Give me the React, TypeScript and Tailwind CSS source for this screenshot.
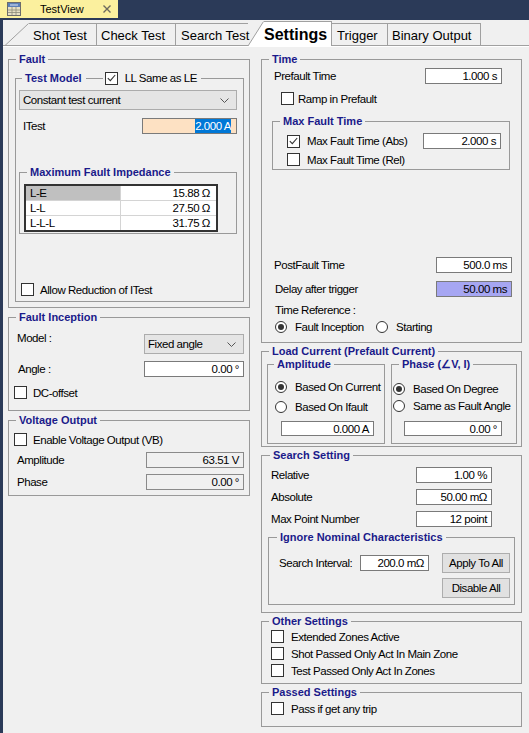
import React from "react";

const FONT = "font-['Liberation_Sans',Arial,sans-serif] text-[11.5px] tracking-[-0.45px]";
const TITLE = "font-['Liberation_Sans',Arial,sans-serif] text-[11px] leading-[14px] font-bold text-[#1a1a8a] tracking-normal";
const TAB = "font-['Liberation_Sans',Arial,sans-serif] text-[13px] tracking-normal";

function Group({
  title,
  className = "",
  legend = "ml-[7px]",
  children,
}: {
  title: React.ReactNode;
  className?: string;
  legend?: string;
  children?: React.ReactNode;
}) {
  return (
    <fieldset className={`border border-[#999] min-w-0 shrink-0 ${className}`}>
      <legend className={`px-[3px] ${legend} ${TITLE}`}>{title}</legend>
      <div className="flex flex-col">{children}</div>
    </fieldset>
  );
}

function Check({
  label,
  checked = false,
  className = "",
  gap = "ml-[7px]",
}: {
  label: string;
  checked?: boolean;
  className?: string;
  gap?: string;
}) {
  return (
    <div className={`flex items-center h-[13px] ${className}`}>
      <span className="w-[13px] h-[13px] shrink-0 border border-[#333] bg-white flex items-center justify-center">
        {checked && (
          <svg width="9" height="8" viewBox="0 0 9 8">
            <path d="M0.8 4.2 L3.3 6.6 L8.2 1" fill="none" stroke="#333" strokeWidth="1.1" />
          </svg>
        )}
      </span>
      <span className={`${gap} whitespace-nowrap leading-[14px]`}>{label}</span>
    </div>
  );
}

function Radio({ label, checked = false, className = "" }: { label: string; checked?: boolean; className?: string }) {
  return (
    <div className={`flex items-center h-[12px] ${className}`}>
      <span className="w-[12px] h-[12px] shrink-0 rounded-full border border-[#333] bg-white flex items-center justify-center">
        {checked && <span className="w-[6px] h-[6px] rounded-full bg-[#333]" />}
      </span>
      <span className="ml-[8px] whitespace-nowrap leading-[14px]">{label}</span>
    </div>
  );
}

function Field({
  children,
  className = "",
  tone = "bg-white",
}: {
  children: React.ReactNode;
  className?: string;
  tone?: string;
}) {
  return (
    <div
      className={`shrink-0 border border-[#7a7a7a] ${tone} flex items-center justify-end pr-[4px] whitespace-nowrap leading-[14px] ${className}`}
    >
      {children}
    </div>
  );
}

function Select({ children, className = "" }: { children: React.ReactNode; className?: string }) {
  return (
    <div className={`shrink-0 flex items-center border border-[#acacac] bg-[#e5e5e5] pl-[3px] pr-[7px] ${className}`}>
      <span className="whitespace-nowrap">{children}</span>
      <svg className="ml-auto" width="9" height="5" viewBox="0 0 9 5">
        <polyline points="0.5,0.5 4.5,4.5 8.5,0.5" fill="none" stroke="#555" />
      </svg>
    </div>
  );
}

function Button({ children }: { children: React.ReactNode }) {
  return (
    <div className="w-[68px] h-[20px] shrink-0 border border-[#adadad] bg-[#e1e1e1] flex items-center justify-center whitespace-nowrap">
      {children}
    </div>
  );
}

function Row({
  label,
  value,
  labelClass,
  fieldClass,
  className = "",
  tone,
}: {
  label: string;
  value: string;
  labelClass: string;
  fieldClass: string;
  className?: string;
  tone?: string;
}) {
  return (
    <div className={`flex items-center h-[16px] ${className}`}>
      <span className={`${labelClass} whitespace-nowrap leading-[14px]`}>{label}</span>
      <Field className={`ml-auto h-[16px] ${fieldClass}`} tone={tone}>
        {value}
      </Field>
    </div>
  );
}

const impedance = [
  ["L-E", "15.88 Ω"],
  ["L-L", "27.50 Ω"],
  ["L-L-L", "31.75 Ω"],
];

export default function App() {
  return (
    <div className={`w-[529px] h-[733px] overflow-hidden bg-[#f0f0f0] leading-[14px] text-black ${FONT}`}>
      {/* document tab bar */}
      <div className="h-[20px] bg-[#2b3a58] flex items-start">
        <div className="h-[18px] w-[118px] bg-[#fbf09e] flex items-center">
          <svg width="14" height="14" viewBox="0 0 14 14" className="ml-[7px] shrink-0">
            <rect x="0.5" y="0.5" width="13" height="13" fill="#e6dfc4" stroke="#6b6b6b" />
            <rect x="1" y="1" width="12" height="4" fill="#5b7fb8" />
            <line x1="3" y1="3" x2="11" y2="3" stroke="#dfe8f5" />
            <path d="M1 8H13M1 10.5H13M5 5V13M9 5V13" stroke="#8a8a7a" strokeWidth="0.8" />
          </svg>
          <span className="ml-[19px] text-[11px] tracking-normal">TestView</span>
          <svg className="ml-auto mr-[7px]" width="8" height="8" viewBox="0 0 8 8">
            <path d="M0.5 0.5 L7.5 7.5 M7.5 0.5 L0.5 7.5" stroke="#6d6a5e" strokeWidth="1.4" />
          </svg>
        </div>
      </div>

      <div className="flex h-[713px]">
        <div className="w-[3px] shrink-0 bg-[#2b3a58]" />
        <div className="flex-1 flex flex-col">
          {/* tabs */}
          <div className="h-[26px] flex items-end shrink-0">
            <div className="w-[2px] h-[23px] border-b border-[#a0a0a0] shrink-0" />
            <svg width="24" height="23" className="shrink-0 block">
              <path d="M0 22.5 L23.5 0.5" stroke="#a0a0a0" fill="none" />
              <line x1="0" y1="22.5" x2="24" y2="22.5" stroke="#a0a0a0" />
            </svg>
            <div className={`w-[68px] h-[23px] pl-[4px] pt-[2px] border-t border-r border-b border-[#a0a0a0] flex items-center whitespace-nowrap ${TAB}`}>
              Shot Test
            </div>
            <div className={`w-[79px] h-[23px] pl-[4px] pt-[2px] border-t border-r border-b border-[#a0a0a0] flex items-center whitespace-nowrap ${TAB}`}>
              Check Test
            </div>
            <div className={`w-[72px] h-[23px] pl-[5px] pt-[2px] border-t border-b border-[#a0a0a0] flex items-center whitespace-nowrap ${TAB}`}>
              Search Test
            </div>
            <div className="relative flex items-end shrink-0">
              <svg width="16" height="25" className="block shrink-0">
                <polygon points="0,25 16,0 16,25" fill="#fff" />
                <path d="M0 25 L15.5 0.5" stroke="#a0a0a0" fill="none" />
              </svg>
              <div className="w-[68px] h-[25px] bg-white border-t border-r border-[#a0a0a0] flex items-center pt-[2px] whitespace-nowrap font-['Liberation_Sans',Arial,sans-serif] text-[16px] font-bold tracking-normal">
                Settings
              </div>
            </div>
            <div className={`w-[56px] h-[23px] pl-[5px] pt-[2px] border-t border-r border-b border-[#a0a0a0] flex items-center whitespace-nowrap ${TAB}`}>
              Trigger
            </div>
            <div className={`w-[93px] h-[23px] pl-[4px] pt-[2px] border-t border-r border-b border-[#a0a0a0] flex items-center whitespace-nowrap ${TAB}`}>
              Binary Output
            </div>
            <div className="flex-1 h-[23px] border-b border-[#a0a0a0]" />
          </div>

          {/* panel */}
          <div className="flex-1 border-t border-white flex pt-[5px] pl-[5px]">
            {/* left column */}
            <div className="w-[242px] flex flex-col shrink-0">
              <Group title="Fault" className="h-[256px]">
                <fieldset className="mt-[5px] ml-[6px] w-[229px] h-[231px] border border-[#999] min-w-0 shrink-0">
                  <legend className="ml-[6px] px-[3px]">
                    <div className="flex items-center h-[14px]">
                      <span className={TITLE}>Test Model</span>
                      <span className="ml-[4px] w-[17px] h-px bg-[#999]" />
                      <Check checked label="LL Same as LE" className="ml-[2px] mr-[1px]" />
                    </div>
                  </legend>
                  <div className="flex flex-col">
                    <Select className="mt-[5px] ml-[3px] w-[218px] h-[20px]">Constant test current</Select>
                    <div className="mt-[8px] flex items-center h-[16px]">
                      <span className="ml-[7px]">ITest</span>
                      <Field className="ml-auto mr-[6px] w-[95px] h-[16px] pr-[5px]" tone="bg-[#fde1c3]">
                        <span className="bg-[#0078d7] text-white">2.000 A</span>
                      </Field>
                    </div>
                    <Group title="Maximum Fault Impedance" className="mt-[31px] ml-[3px] w-[218px] h-[69px]">
                      <div className="mt-[5px] ml-[4px] w-[194px] h-[48px] border-2 border-[#333] bg-white flex flex-col">
                        {impedance.map((r, i) => (
                          <div key={r[0]} className={`flex-1 flex ${i > 0 ? "border-t border-[#d4d4d4]" : ""}`}>
                            <div
                              className={`w-[95px] border-r border-[#d4d4d4] pl-[4px] flex items-center ${i === 0 ? "bg-[#c0c0c0]" : ""}`}
                            >
                              {r[0]}
                            </div>
                            <div className="flex-1 flex items-center justify-end pr-[6px]">{r[1]}</div>
                          </div>
                        ))}
                      </div>
                    </Group>
                    <Check label="Allow Reduction of ITest" className="mt-[49px] ml-[5px]" gap="ml-[6px]" />
                  </div>
                </fieldset>
              </Group>

              <Group title="Fault Inception" className="mt-[2px] h-[101px]">
                <div className="mt-[7px] flex items-start h-[23px]">
                  <span className="ml-[8px]">Model :</span>
                  <Select className="ml-auto mr-[5px] mt-[3px] w-[100px] h-[20px]">Fixed angle</Select>
                </div>
                <Row className="mt-[7px]" label="Angle :" value="0.00 °" labelClass="ml-[9px]" fieldClass="mr-[5px] w-[100px]" />
                <Check label="DC-offset" className="mt-[9px] ml-[5px]" gap="ml-[6px]" />
              </Group>

              <Group title="Voltage Output" className="mt-[2px] h-[83px]">
                <Check label="Enable Voltage Output (VB)" className="mt-[6px] ml-[5px]" gap="ml-[6px]" />
                <Row
                  className="mt-[6px]"
                  label="Amplitude"
                  value="63.51 V"
                  labelClass="ml-[8px]"
                  fieldClass="mr-[5px] w-[98px] border-[#8a8a8a]"
                  tone="bg-[#f0f0f0]"
                />
                <Row
                  className="mt-[6px]"
                  label="Phase"
                  value="0.00 °"
                  labelClass="ml-[8px]"
                  fieldClass="mr-[5px] w-[98px] border-[#8a8a8a]"
                  tone="bg-[#f0f0f0]"
                />
              </Group>
            </div>

            {/* right column */}
            <div className="ml-[11px] w-[261px] flex flex-col shrink-0">
              <Group title="Time" className="h-[291px]">
                <Row className="mt-[2px]" label="Prefault Time" value="1.000 s" labelClass="ml-[12px]" fieldClass="mr-[19px] w-[77px]" />
                <Check label="Ramp in Prefault" className="mt-[8px] ml-[19px]" gap="ml-[4px]" />
                <Group title="Max Fault Time" className="mt-[9px] ml-[10px] w-[238px] h-[56px]">
                  <div className="mt-[5px] flex items-center h-[16px]">
                    <Check checked label="Max Fault Time (Abs)" className="ml-[14px]" />
                    <Field className="ml-auto mr-[8px] w-[78px] h-[16px]">2.000 s</Field>
                  </div>
                  <Check label="Max Fault Time (Rel)" className="mt-[4px] ml-[14px]" />
                </Group>
                <Row className="mt-[87px]" label="PostFault Time" value="500.0 ms" labelClass="ml-[12px]" fieldClass="mr-[9px] w-[76px]" />
                <Row
                  className="mt-[8px]"
                  label="Delay after trigger"
                  value="50.00 ms"
                  labelClass="ml-[13px]"
                  fieldClass="mr-[9px] w-[76px]"
                  tone="bg-[#a6a6f2]"
                />
                <span className="mt-[6px] ml-[13px]">Time Reference :</span>
                <div className="mt-[4px] ml-[13px] flex items-center">
                  <Radio checked label="Fault Inception" className="w-[101px]" />
                  <Radio label="Starting" />
                </div>
              </Group>

              <Group title="Load Current (Prefault Current)" className="mt-[1px] h-[103px]">
                <div className="flex items-start">
                  <Group title="Amplitude" legend="ml-[6px]" className="-mt-[1px] ml-[5px] w-[118px] h-[87px]">
                    <Radio checked label="Based On Current" className="mt-[10px] ml-[7px]" />
                    <Radio label="Based On Ifault" className="mt-[8px] ml-[7px]" />
                    <Field className="mt-[8px] ml-[13px] w-[93px] h-[15px]">0.000 A</Field>
                  </Group>
                  <Group title="Phase (∠V, I)" className="-mt-[1px] ml-[6px] w-[126px] h-[87px]">
                    <Radio checked label="Based On Degree" className="mt-[12px] ml-[1px]" />
                    <Radio label="Same as Fault Angle" className="mt-[5px] ml-[1px]" />
                    <Field className="mt-[9px] ml-[12px] w-[98px] h-[15px]">0.00 °</Field>
                  </Group>
                </div>
              </Group>

              <Group title="Search Setting" legend="ml-[8px]" className="mt-[1px] h-[165px]">
                <Row className="mt-[5px]" label="Relative" value="1.00 %" labelClass="ml-[9px]" fieldClass="mr-[29px] w-[76px]" />
                <Row className="mt-[6px]" label="Absolute" value="50.00 mΩ" labelClass="ml-[9px]" fieldClass="mr-[29px] w-[76px]" />
                <Row className="mt-[6px]" label="Max Point Number" value="12 point" labelClass="ml-[9px]" fieldClass="mr-[29px] w-[76px]" />
                <Group title="Ignore Nominal Characteristics" legend="ml-[8px]" className="mt-[3px] ml-[6px] w-[247px] h-[75px]">
                  <div className="mt-[9px] flex items-center h-[20px]">
                    <span className="ml-[10px] w-[81px] whitespace-nowrap">Search Interval:</span>
                    <Field className="w-[69px] h-[16px]">200.0 mΩ</Field>
                    <div className="ml-[13px]">
                      <Button>Apply To All</Button>
                    </div>
                  </div>
                  <div className="mt-[5px] flex justify-end pr-[4px]">
                    <Button>Disable All</Button>
                  </div>
                </Group>
              </Group>

              <Group title="Other Settings" className="mt-[1px] h-[70px]">
                <Check label="Extended Zones Active" className="mt-[2px] ml-[9px]" />
                <Check label="Shot Passed Only Act In Main Zone" className="mt-[4px] ml-[9px]" />
                <Check label="Test Passed Only Act In Zones" className="mt-[4px] ml-[9px]" />
              </Group>

              <Group title="Passed Settings" className="mt-[1px] h-[42px]">
                <Check label="Pass if get any trip" className="mt-[3px] ml-[9px]" />
              </Group>
            </div>
          </div>
        </div>
      </div>
    </div>
  );
}
